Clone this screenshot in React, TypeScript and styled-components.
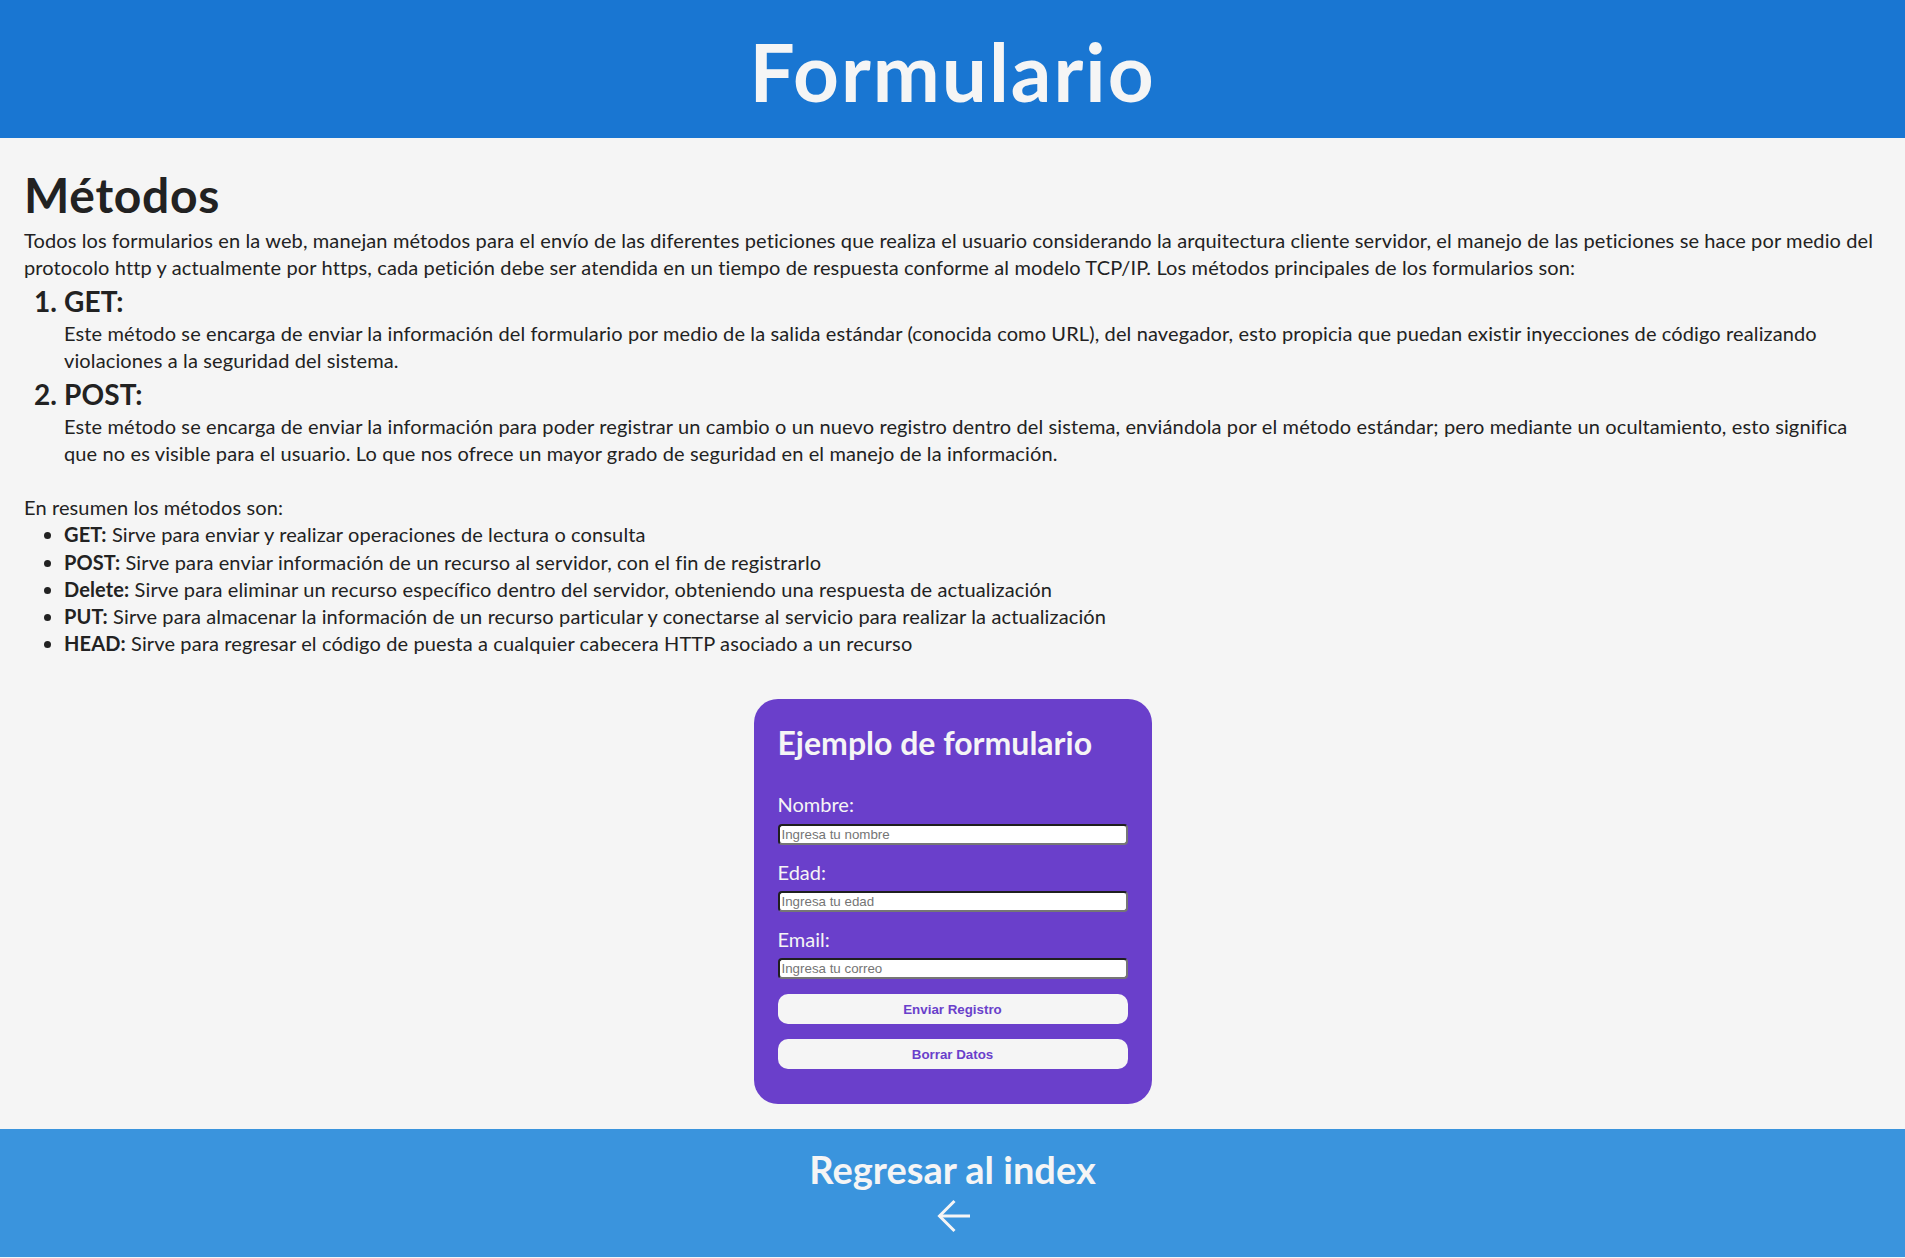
import React from "react";
import styled, { createGlobalStyle } from "styled-components";

const GlobalStyle = createGlobalStyle`
  * { box-sizing: border-box; }
  body {
    margin: 0;
    background: #f5f5f5;
    color: #222222;
    font-family: "Lato", "Open Sans", sans-serif;
  }
`;

const Header = styled.header`
  background: #1976d2;
  padding: 18px 16px 14px;
`;

const Title = styled.h1`
  margin: 0;
  font-size: 80px;
  line-height: 106px;
  font-weight: 700;
  letter-spacing: 2px;
  text-align: center;
  color: #f5f5f5;
`;

const Main = styled.main`
  padding: 25px 24px 25px;
  font-size: 20px;
  line-height: 27.2px;
  letter-spacing: 0.12px;
`;

const SectionTitle = styled.h2`
  margin: 0;
  font-size: 48px;
  line-height: 64px;
  font-weight: 700;
  letter-spacing: 0.7px;
`;

const Paragraph = styled.p`
  margin: 0;
`;

const MethodList = styled.ol`
  margin: 0 0 27px;
  padding-left: 40px;
`;

const MethodItem = styled.li`
  margin-top: 1.5px;
  font-size: 28px;
  line-height: 37px;
  font-weight: 700;
`;

const MethodName = styled.span`
  display: block;
`;

const MethodText = styled.p`
  margin: 0;
  font-size: 20px;
  line-height: 27.2px;
  font-weight: 400;
`;

const SummaryList = styled.ul`
  margin: 0;
  padding-left: 40px;
`;

const SummaryItem = styled.li``;

const Card = styled.form`
  width: 398px;
  margin: 42px auto 0;
  padding: 24px 24px 21px;
  border-radius: 24px;
  background: #6a3fcb;
  color: #f5f5f5;
  display: flex;
  flex-direction: column;
  letter-spacing: 0;
`;

const CardTitle = styled.h2`
  margin: 0 0 28px;
  font-size: 32px;
  line-height: 40px;
  font-weight: 700;
`;

const Label = styled.label`
  display: block;
  font-size: 20px;
  line-height: 27.2px;
  margin-bottom: 5px;
`;

const Input = styled.input`
  display: block;
  width: 100%;
  height: 21px;
  margin: 0 0 14px;
  padding: 1px 2px;
  border: 2px solid;
  border-color: #1f1f1f #767676 #767676 #1f1f1f;
  border-radius: 4px;
  background: #ffffff;
  font-family: "Liberation Sans", Arial, sans-serif;
  font-size: 13.33px;
  color: #222;
  &::placeholder {
    color: #757575;
  }
`;

const Button = styled.button`
  display: block;
  width: 100%;
  height: 30px;
  margin: 1px 0 14px;
  border: none;
  border-radius: 10px;
  background: #f5f5f5;
  color: #6a3fcb;
  font-family: "Liberation Sans", Arial, sans-serif;
  font-size: 13.33px;
  font-weight: 700;
  cursor: pointer;
`;

const Footer = styled.footer`
  background: #3a94dd;
  padding: 15px 16px 24px;
  display: flex;
  flex-direction: column;
  align-items: center;
`;

const BackLink = styled.a`
  color: #f5f5f5;
  text-decoration: none;
  font-size: 38px;
  line-height: 50px;
  font-weight: 700;
`;

const ArrowIcon = styled.svg`
  display: block;
  margin-top: 5px;
  width: 34px;
  height: 34px;
`;

const summary: [string, string][] = [
  ["GET:", "Sirve para enviar y realizar operaciones de lectura o consulta"],
  ["POST:", "Sirve para enviar información de un recurso al servidor, con el fin de registrarlo"],
  ["Delete:", "Sirve para eliminar un recurso específico dentro del servidor, obteniendo una respuesta de actualización"],
  ["PUT:", "Sirve para almacenar la información de un recurso particular y conectarse al servicio para realizar la actualización"],
  ["HEAD:", "Sirve para regresar el código de puesta a cualquier cabecera HTTP asociado a un recurso"],
];

export default function App() {
  return (
    <>
      <GlobalStyle />
      <Header>
        <Title>Formulario</Title>
      </Header>
      <Main>
        <SectionTitle>Métodos</SectionTitle>
        <Paragraph>
          Todos los formularios en la web, manejan métodos para el envío de las diferentes peticiones que realiza el
          usuario considerando la arquitectura cliente servidor, el manejo de las peticiones se hace por medio del
          protocolo http y actualmente por https, cada petición debe ser atendida en un tiempo de respuesta conforme al
          modelo TCP/IP. Los métodos principales de los formularios son:
        </Paragraph>
        <MethodList>
          <MethodItem>
            <MethodName>GET:</MethodName>
            <MethodText>
              Este método se encarga de enviar la información del formulario por medio de la salida estándar (conocida
              como URL), del navegador, esto propicia que puedan existir inyecciones de código realizando violaciones a
              la seguridad del sistema.
            </MethodText>
          </MethodItem>
          <MethodItem>
            <MethodName>POST:</MethodName>
            <MethodText>
              Este método se encarga de enviar la información para poder registrar un cambio o un nuevo registro dentro
              del sistema, enviándola por el método estándar; pero mediante un ocultamiento, esto significa que no es
              visible para el usuario. Lo que nos ofrece un mayor grado de seguridad en el manejo de la información.
            </MethodText>
          </MethodItem>
        </MethodList>
        <Paragraph>En resumen los métodos son:</Paragraph>
        <SummaryList>
          {summary.map(([name, text]) => (
            <SummaryItem key={name}>
              <strong>{name}</strong> {text}
            </SummaryItem>
          ))}
        </SummaryList>
        <Card onSubmit={(e) => e.preventDefault()}>
          <CardTitle>Ejemplo de formulario</CardTitle>
          <Label htmlFor="nombre">Nombre:</Label>
          <Input id="nombre" type="text" placeholder="Ingresa tu nombre" />
          <Label htmlFor="edad">Edad:</Label>
          <Input id="edad" type="number" placeholder="Ingresa tu edad" />
          <Label htmlFor="email">Email:</Label>
          <Input id="email" type="email" placeholder="Ingresa tu correo" />
          <Button type="submit">Enviar Registro</Button>
          <Button type="reset">Borrar Datos</Button>
        </Card>
      </Main>
      <Footer>
        <BackLink href="#">Regresar al index</BackLink>
        <ArrowIcon viewBox="0 0 34 34" fill="none" stroke="#f5f5f5" strokeWidth="3">
          <path d="M3 17H34" />
          <path d="M18.5 2L3.5 17L18.5 32" />
        </ArrowIcon>
      </Footer>
    </>
  );
}
